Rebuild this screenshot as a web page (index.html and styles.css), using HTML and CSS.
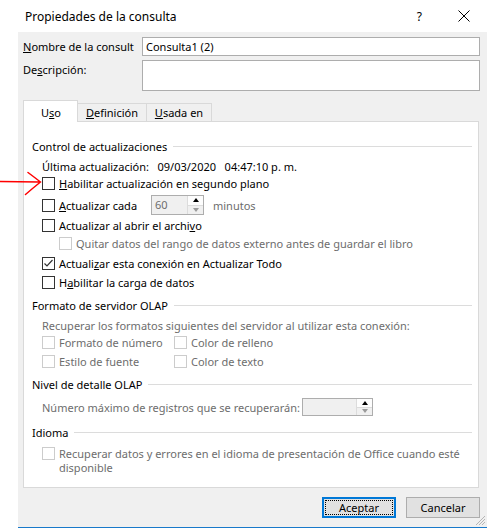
FILE: index.html
```html
<!DOCTYPE html>
<html lang="es">
<head>
<meta charset="utf-8">
<title>Propiedades de la consulta</title>
<link rel="stylesheet" href="styles.css">
</head>
<body>
<div class="window">
  <div class="titlebar">
    <span class="title">Propiedades de la consulta</span>
    <span class="help">?</span>
    <svg class="close" width="12" height="12" viewBox="0 0 12 12"><path d="M0.5 0.5 L11.5 11.5 M11.5 0.5 L0.5 11.5" stroke="#000" stroke-width="1" fill="none"/></svg>
  </div>
  <div class="dialog">
    <div class="field-row">
      <span class="field-label"><u>N</u>ombre de la consult</span>
      <div class="input">Consulta1 (2)</div>
    </div>
    <div class="field-row desc">
      <span class="field-label">De<u>s</u>cripción:</span>
      <div class="input tall"></div>
    </div>
    <div class="tabs">
      <div class="tab active">U<u>s</u>o</div>
      <div class="tab"><u>D</u>efinición</div>
      <div class="tab"><u>U</u>sada en</div>
    </div>
    <div class="panel">
      <div class="heading h-first">Control de actualizaciones</div>
      <div class="row indent">Última actualización:&nbsp;&nbsp; 09/03/2020&nbsp;&nbsp; 04:47:10 p. m.</div>
      <div class="row indent r-hab"><span class="cb"></span><span><u>H</u>abilitar actualización en segundo plano</span></div>
      <div class="row indent r-cada"><span class="cb"></span><span class="cada-label"><u>A</u>ctualizar cada</span>
        <div class="spin small"><span class="spin-val">60</span><span class="spin-btns"><span class="up"></span><span class="down"></span></span></div>
        <span class="dis minutes">minutos</span></div>
      <div class="row indent r-abrir"><span class="cb"></span><span>Actualizar al abrir el archi<u>v</u>o</span></div>
      <div class="row indent2 r-quitar dis"><span class="cb off"></span><span>Quitar datos del rango de datos externo antes de guardar el libro</span></div>
      <div class="row indent r-todo"><span class="cb"><svg width="11" height="11" viewBox="0 0 11 11"><path d="M1.5 5.5 L4 8 L9.5 2" stroke="#333" stroke-width="1.2" fill="none"/></svg></span><span>Actuali<u>z</u>ar esta conexión en Actualizar Todo</span></div>
      <div class="row indent r-carga"><span class="cb"></span><span>H<u>a</u>bilitar la carga de datos</span></div>

      <div class="heading h-olap">Formato de servidor OLAP</div>
      <div class="row indent dis">Recuperar los formatos siguientes del servidor al utilizar esta conexión:</div>
      <div class="row indent dis r-o1"><span class="col"><span class="cb off"></span><span>Formato de número</span></span><span class="col"><span class="cb off"></span><span>Color de relleno</span></span></div>
      <div class="row indent dis r-o2"><span class="col"><span class="cb off"></span><span>Estilo de fuente</span></span><span class="col"><span class="cb off"></span><span>Color de texto</span></span></div>

      <div class="heading h-nivel">Nivel de detalle OLAP</div>
      <div class="row indent dis r-num"><span class="num-label">Número máximo de registros que se recuperarán:</span>
        <div class="spin wide"><span class="spin-val"></span><span class="spin-btns"><span class="up"></span><span class="down"></span></span></div></div>

      <div class="heading h-idioma">Idioma</div>
      <div class="multi indent dis"><span class="cb off"></span><span>Recuperar datos y errores en el idioma de presentación de Office cuando esté<br>disponible</span></div>
    </div>
    <div class="buttons">
      <div class="btn default"><span class="focus">Aceptar</span></div>
      <div class="btn">Cancelar</div>
    </div>
  </div>
  <svg class="arrow" width="44" height="26" viewBox="0 170 44 26"><path d="M0 181.5 L39 182 M28 172.5 Q34 177 40.5 182 Q33 188 25.5 194.5" stroke="#ff0000" stroke-width="1.5" fill="none" stroke-linecap="round"/></svg>
  <svg class="grip" width="10" height="10" viewBox="0 0 10 10"><g fill="#b5b5b5"><rect x="8" y="0" width="1" height="1"/><rect x="7" y="1" width="1" height="1"/><rect x="6" y="2" width="1" height="1"/><rect x="5" y="3" width="1" height="1"/><rect x="4" y="4" width="1" height="1"/><rect x="3" y="5" width="1" height="1"/><rect x="2" y="6" width="1" height="1"/><rect x="1" y="7" width="1" height="1"/><rect x="0" y="8" width="1" height="1"/><rect x="8" y="3" width="1" height="1"/><rect x="7" y="4" width="1" height="1"/><rect x="6" y="5" width="1" height="1"/><rect x="5" y="6" width="1" height="1"/><rect x="4" y="7" width="1" height="1"/><rect x="3" y="8" width="1" height="1"/><rect x="8" y="6" width="1" height="1"/><rect x="7" y="7" width="1" height="1"/><rect x="6" y="8" width="1" height="1"/></g></svg>
</div>
</body>
</html>
```
FILE: styles.css
```css
* { box-sizing: border-box; }
html, body { margin: 0; padding: 0; background: #fff; }
body {
  font-family: "Noto Sans", "Open Sans", sans-serif;
  font-size: 11px;
  line-height: 15px;
  color: #000;
  white-space: nowrap;
}
.window {
  position: relative;
  width: 487px;
  height: 528px;
  overflow: hidden;
}
.titlebar {
  height: 32px;
  display: flex;
  align-items: center;
  padding-left: 25px;
}
.title { font-size: 12px; }
.help { margin-left: auto; font-size: 12px; }
.close { margin-left: 36px; margin-right: 17px; }

.dialog {
  margin-left: 18px;
  height: 496px;
  background: #f0f0f0;
  border-bottom: 1px solid #1979ca;
  padding: 5px 7px 0 5px;
  display: flex;
  flex-direction: column;
}
.field-row { display: flex; align-items: center; flex-shrink: 0; }
.field-row.desc { align-items: flex-start; margin-top: 4px; }
.field-label { width: 119px; line-height: 19px; }
.input {
  flex: 1;
  height: 19px;
  background: #fff;
  border: 1px solid #adadad;
  padding-left: 3px;
  line-height: 17px;
}
.input.tall { height: 31px; }

.tabs {
  display: flex;
  margin-top: 9px;
  height: 21px;
  flex-shrink: 0;
  align-items: flex-end;
  position: relative;
  z-index: 1;
}
.tab {
  height: 18px;
  border: 1px solid #d9d9d9;
  border-bottom: none;
  background: #f0f0f0;
  display: flex;
  align-items: center;
  justify-content: center;
}
.tab + .tab { border-left: none; }
.tab.active {
  height: 22px;
  margin-bottom: -1px;
  background: #fff;
  width: 55px;
  padding-top: 2px;
  justify-content: flex-start;
  padding-left: 17px;
}
.tab:nth-child(2) { width: 69px; }
.tab:nth-child(3) { width: 65px; }

.panel {
  width: 456px;
  height: 367px;
  flex-shrink: 0;
  background: #fff;
  border: 1px solid #d9d9d9;
  padding: 14px 6px 0 8px;
  display: flex;
  flex-direction: column;
}
.heading {
  height: 20px;
  display: flex;
  align-items: center;
  gap: 6px;
  flex-shrink: 0;
}
.heading::after {
  content: "";
  flex: 1;
  border-top: 1px solid #dcdcdc;
}
.row {
  height: 20px;
  display: flex;
  align-items: center;
  flex-shrink: 0;
}
.indent { margin-left: 10px; }
.indent2 { margin-left: 27px; }
.dis { color: #6d6d6d; }

.cb {
  width: 13px;
  height: 13px;
  border: 1px solid #333;
  background: #fff;
  margin-right: 4px;
  flex-shrink: 0;
  display: inline-flex;
  align-items: center;
  justify-content: center;
}
.cb.off { border-color: #cccccc; }

.r-hab { margin-top: -3px; }
.r-cada { margin-top: 2px; }
.r-quitar { margin-top: -2px; }
.r-carga { margin-top: -1px; }
.h-olap { margin-top: 3px; }
.r-o1 { margin-top: -3px; }
.r-o2 { margin-top: -1px; }
.h-nivel { margin-top: 3px; }
.r-num { margin-top: 3px; }
.h-idioma { margin-top: 5px; }

.cada-label { width: 92px; }
.minutes { margin-left: 9px; }
.col { display: flex; align-items: center; width: 132px; }

.spin {
  display: flex;
  border: 1px solid #adadad;
  background: #f0f0f0;
}
.spin.small { width: 53px; height: 20px; }
.spin.wide { width: 71px; height: 18px; }
.spin-val { flex: 1; padding-left: 3px; color: #6d6d6d; line-height: 18px; }
.spin-btns {
  width: 16px;
  display: flex;
  flex-direction: column;
  border-left: 1px solid #dcdcdc;
}
.spin-btns span {
  flex: 1;
  display: flex;
  align-items: center;
  justify-content: center;
}
.spin-btns .up { border-bottom: 1px solid #dcdcdc; background: #fdfdfd; }
.spin-btns .up::before {
  content: "";
  border-left: 3.5px solid transparent;
  border-right: 3.5px solid transparent;
  border-bottom: 4px solid #000;
}
.spin-btns .down::before {
  content: "";
  border-left: 3.5px solid transparent;
  border-right: 3.5px solid transparent;
  border-top: 4px solid #9a9a9a;
}
.num-label { width: 260px; }

.multi {
  display: flex;
  align-items: flex-start;
  margin-top: 5px;
  line-height: 14px;
  flex-shrink: 0;
}

.buttons {
  display: flex;
  justify-content: flex-end;
  gap: 10px;
  margin-top: 9px;
  flex-shrink: 0;
}
.btn {
  width: 74px;
  height: 21px;
  background: #e1e1e1;
  border: 1px solid #adadad;
  display: flex;
  align-items: center;
  justify-content: center;
}
.btn.default {
  border: 2px solid #0078d7;
  padding: 1px;
}
.focus {
  width: 100%;
  height: 100%;
  border: 1px dotted #000;
  display: flex;
  align-items: center;
  justify-content: center;
}

.arrow { position: absolute; left: 0; top: 170px; }
.grip { position: absolute; right: 1px; bottom: 2px; }
```
